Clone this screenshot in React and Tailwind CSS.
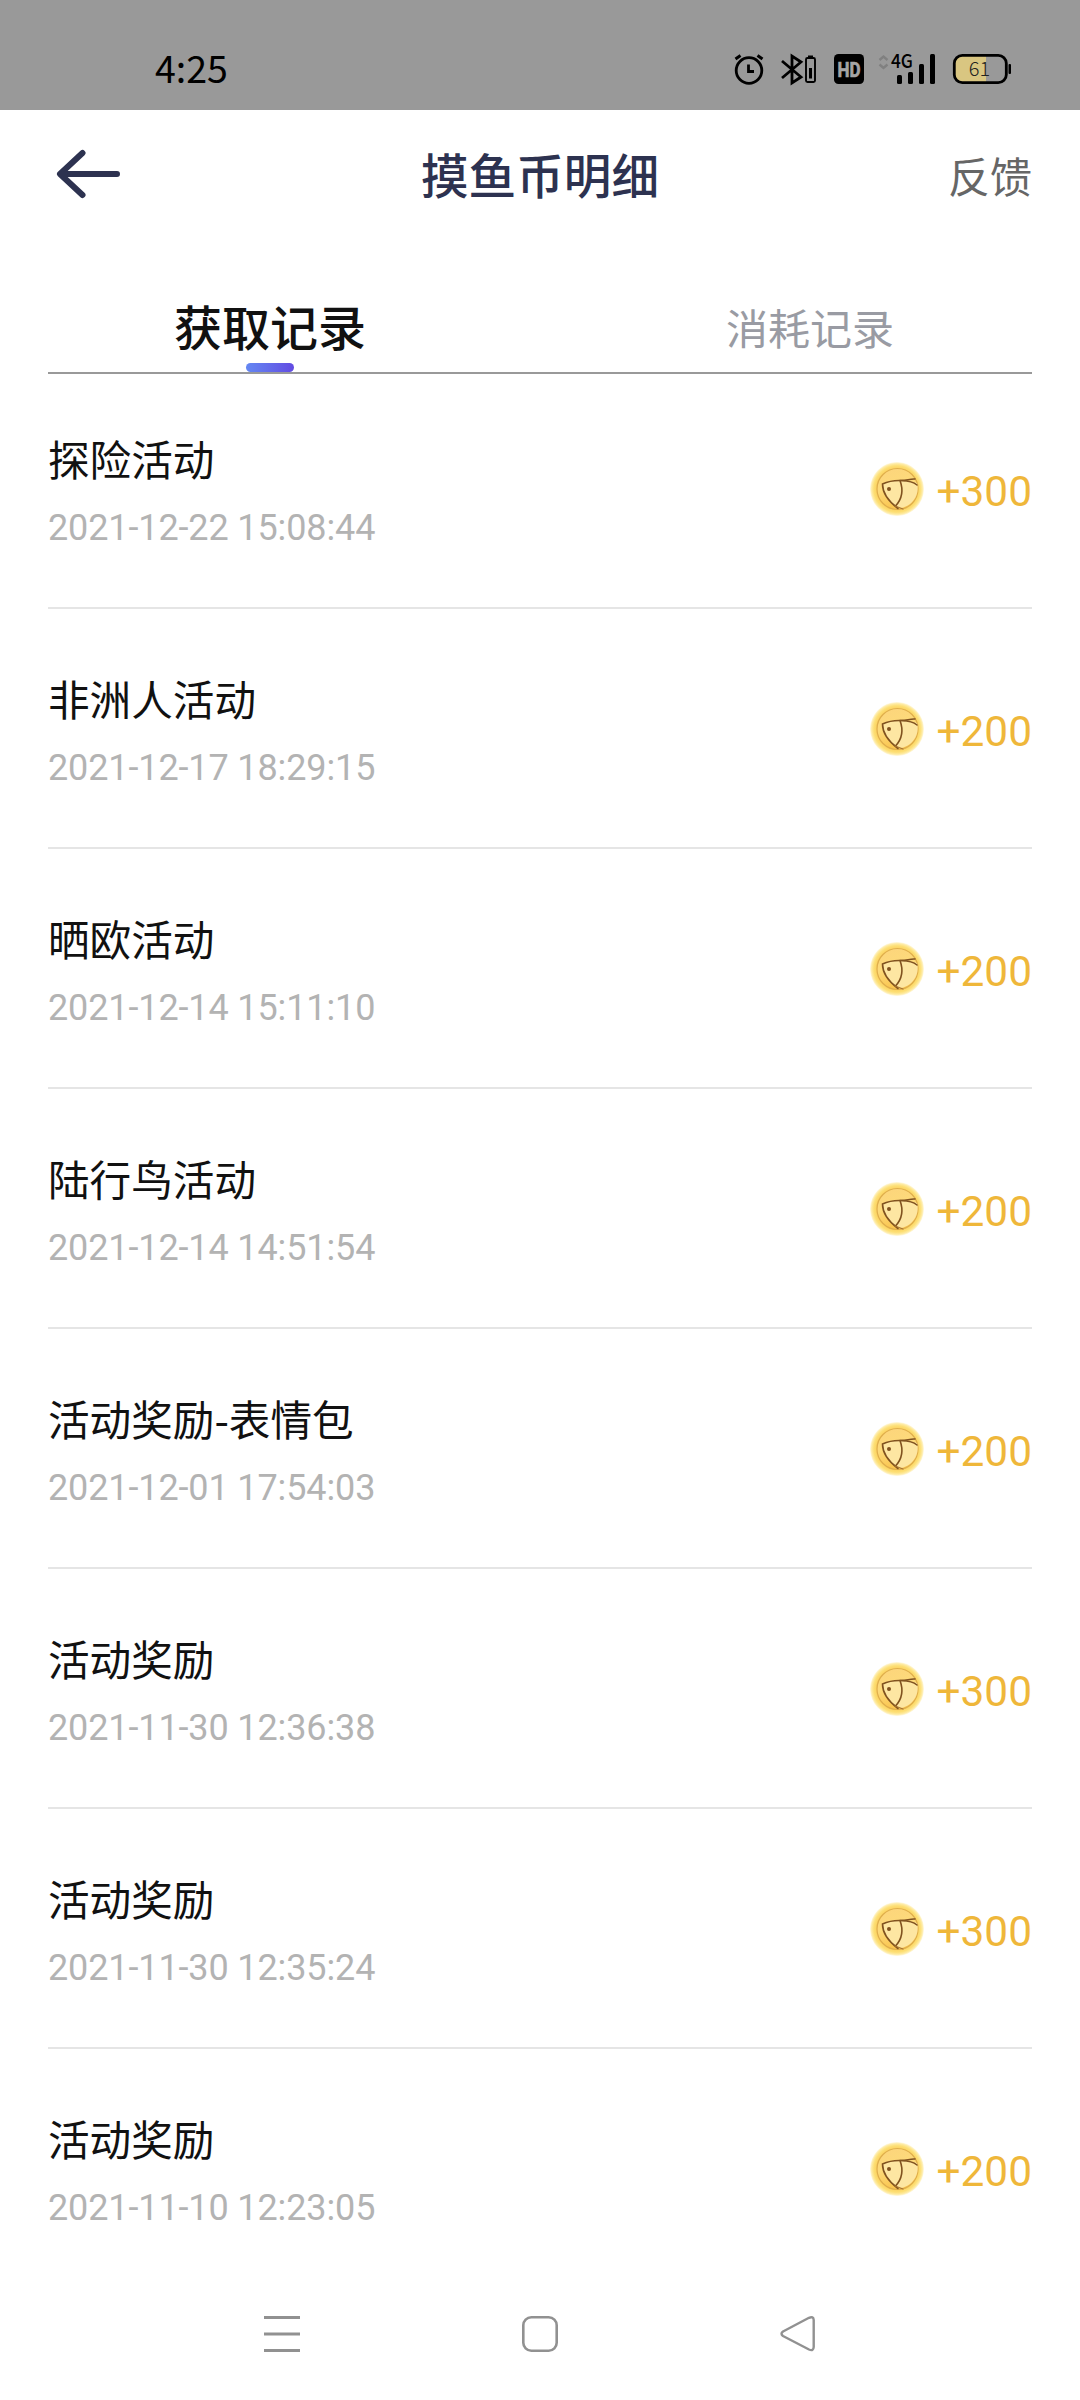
import React from "react";

const records = [
  ["探险活动", "2021-12-22 15:08:44", "+300"],
  ["非洲人活动", "2021-12-17 18:29:15", "+200"],
  ["晒欧活动", "2021-12-14 15:11:10", "+200"],
  ["陆行鸟活动", "2021-12-14 14:51:54", "+200"],
  ["活动奖励-表情包", "2021-12-01 17:54:03", "+200"],
  ["活动奖励", "2021-11-30 12:36:38", "+300"],
  ["活动奖励", "2021-11-30 12:35:24", "+300"],
  ["活动奖励", "2021-11-10 12:23:05", "+200"],
];

function CoinDefs() {
  return (
    <svg className="absolute h-0 w-0" aria-hidden="true">
      <defs>
        <radialGradient id="coinRim">
          <stop offset="0.74" stopColor="#fbd05f" />
          <stop offset="0.86" stopColor="#fddf74" />
          <stop offset="0.94" stopColor="#feeba4" />
          <stop offset="1" stopColor="#fffae6" />
        </radialGradient>
        <linearGradient id="coinFace" x1="0" y1="0" x2="0.3" y2="1">
          <stop offset="0" stopColor="#fcd47c" />
          <stop offset="0.5" stopColor="#fdda7a" />
          <stop offset="1" stopColor="#fac54e" />
        </linearGradient>
      </defs>
    </svg>
  );
}

function Coin() {
  return (
    <svg className="h-[54px] w-[54px] shrink-0" viewBox="0 0 54 54" fill="none">
      <circle cx="27" cy="27" r="27" fill="url(#coinRim)" />
      <circle cx="27.500" cy="27" r="20.500" fill="url(#coinFace)" stroke="#dfae4c" strokeWidth="1.200" />
      <path d="M12.500 22Q29 15 47 21C50 32 43 45 28 46.500C19 41 13 32 12.500 22Z" fill="#fde6a2" />
      <path d="M47 23C41 18 24 16.500 12.500 22C12.500 31 18 39 28 46.500" stroke="#80521f" strokeWidth="1.600" strokeLinecap="round" />
      <path d="M30 18.500C33.500 28 32 37 25.500 44M30 18.500C36 19 40 16.500 45 17" stroke="#80521f" strokeWidth="1.600" strokeLinecap="round" />
      <path d="M25 44L33 47" stroke="#a97430" strokeWidth="1.300" strokeLinecap="round" />
      <circle cx="19" cy="27" r="2" fill="#80521f" />
    </svg>
  );
}

function StatusBar() {
  return (
    <div className="flex h-[110px] shrink-0 items-start justify-between bg-[#999999] pl-[155px] text-black">
      <div className="pt-[41px] text-[37.5px] leading-[52px]">4:25</div>
      <svg className="mt-[40px] mr-[60px] h-[60px] w-[300px]" viewBox="0 0 300 60" fill="none" stroke="#000">
        <circle cx="29" cy="30.500" r="12.800" strokeWidth="2.800" />
        <path d="M15.500 19L20.500 15.500M42.500 19L37.500 15.500" strokeWidth="3" />
        <path d="M28.500 24.500V31.500H34" strokeWidth="2.800" />
        <path d="M62 21L81 37L72 43V16L81 22L62 38" strokeWidth="2.800" />
        <rect x="86" y="18" width="9" height="24" rx="1.500" strokeWidth="1.900" />
        <path d="M88 16.500H93" strokeWidth="2" />
        <path d="M90.500 28V38.500" strokeWidth="3" />
        <rect x="114" y="14" width="30" height="30" rx="4.500" fill="#000" stroke="none" />
        <text x="129" y="36.500" textAnchor="middle" textLength="23" lengthAdjust="spacingAndGlyphs" fill="#a5a5a5" stroke="#a5a5a5" strokeWidth="0.700" className="font-['Roboto'] text-[20.5px] font-bold">HD</text>
        <path d="M159.500 20L163.500 16.500L167.500 20M159.500 24.500L163.500 28L167.500 24.500" stroke="#808080" strokeWidth="2.400" />
        <text x="171" y="28" textLength="22" lengthAdjust="spacingAndGlyphs" fill="#000" stroke="none" className="font-['Noto_Sans_CJK_SC'] text-[19px] font-medium">4G</text>
        <g fill="#000" stroke="none">
          <rect x="177" y="35" width="5" height="9" rx="1.500" />
          <rect x="188" y="32" width="5" height="12" rx="1.500" />
          <rect x="199" y="24" width="5" height="20" rx="1.500" />
          <rect x="210" y="14" width="5" height="30" rx="1.500" />
        </g>
        <path d="M241 16H266V42H241A7 7 0 0 1 235 36V22A7 7 0 0 1 241 16Z" fill="#d9c681" stroke="none" />
        <rect x="234.300" y="15.300" width="52" height="27.400" rx="8" strokeWidth="2.800" />
        <rect x="288.500" y="24" width="2.500" height="10" rx="1" fill="#000" stroke="none" />
        <text x="259.500" y="36" textAnchor="middle" fill="#222" stroke="none" className="font-['Noto_Sans_CJK_SC'] text-[20px] font-light">61</text>
      </svg>
    </div>
  );
}

function Header() {
  return (
    <header className="grid h-[133px] shrink-0 grid-cols-[1fr_238px_1fr] items-center px-12">
      <svg className="-mt-[5px] ml-[8px] h-[50px] w-[64px]" viewBox="0 0 64 50" fill="none" stroke="#2d3250" strokeWidth="6" strokeLinecap="round" strokeLinejoin="round">
        <path d="M26.500 4L4 25L26.500 46M5 25H61" />
      </svg>
      <h1 className="-mt-[6px] text-[47.600px] leading-[70px] font-medium whitespace-nowrap text-[#2d3250]">摸鱼币明细</h1>
      <button className="-mt-[3px] justify-self-end text-[42px] leading-[60px] text-[#666666]">反馈</button>
    </header>
  );
}

function Tabs() {
  return (
    <nav className="mt-[30px] h-[101px] shrink-0">
      <div className="grid h-[99px] grid-cols-2 text-center">
        <div className="flex flex-col items-center justify-between pt-[17px]">
          <span className="text-[48px] leading-[70px] font-medium text-[#111111]">获取记录</span>
          <span className="h-[9px] w-12 rounded-full bg-linear-to-r from-[#6487f2] to-[#624ae2]" />
        </div>
        <span className="pt-[24px] text-[42px] leading-[60px] text-[#999ba3]">消耗记录</span>
      </div>
      <div className="mx-12 h-[2px] bg-[#999999]" />
    </nav>
  );
}

function RecordRow({ title, time, amount, last }) {
  return (
    <li className={last ? "flex h-[240px] justify-between" : "flex h-[240px] justify-between border-b-2 border-[#e5e5e5]"}>
      <div className="pt-[58px]">
        <div className="text-[41.600px] leading-[62px] text-[#111111]">{title}</div>
        <div className="mt-[18px] font-['Roboto'] text-[36px] leading-[42px] tracking-[-0.12px] text-[#b3b3b3]">{time}</div>
      </div>
      <div className="mt-[93px] flex h-[54px] items-center gap-[12px]">
        <Coin />
        <span className="mt-[6px] font-['Roboto'] text-[42.400px] leading-[50px] text-[#efb73a]">{amount}</span>
      </div>
    </li>
  );
}

function NavigationBar() {
  return (
    <footer className="flex h-[132px] shrink-0 items-center justify-between bg-white px-[264px]">
      <svg className="h-9 w-9" viewBox="0 0 36 36" fill="#919191">
        <path d="M0 0H36V3H0ZM0 16.500H36V19.500H0ZM0 33H36V36H0Z" />
      </svg>
      <svg className="h-9 w-9" viewBox="0 0 36 36" fill="none" stroke="#919191" strokeWidth="2.600">
        <rect x="1.300" y="1.300" width="33.400" height="33.400" rx="8" />
      </svg>
      <svg className="h-9 w-9" viewBox="0 0 36 36" fill="none" stroke="#919191" strokeWidth="2.400" strokeLinejoin="round">
        <path d="M3 15.500L29 1.800Q33.500 0 33.700 4V31Q33.500 35.500 29 33.500L3 20Q0 17.750 3 15.500Z" />
      </svg>
    </footer>
  );
}

export default function App() {
  return (
    <div className="flex h-[2400px] w-[1080px] flex-col overflow-hidden bg-white font-['Noto_Sans_CJK_SC',sans-serif]">
      <CoinDefs />
      <StatusBar />
      <Header />
      <Tabs />
      <ul className="-mt-[5px] h-[1899px] shrink-0 overflow-hidden px-12">
        {records.map(([title, time, amount], i) => (
          <RecordRow key={i} title={title} time={time} amount={amount} last={i === records.length - 1} />
        ))}
      </ul>
      <NavigationBar />
    </div>
  );
}
